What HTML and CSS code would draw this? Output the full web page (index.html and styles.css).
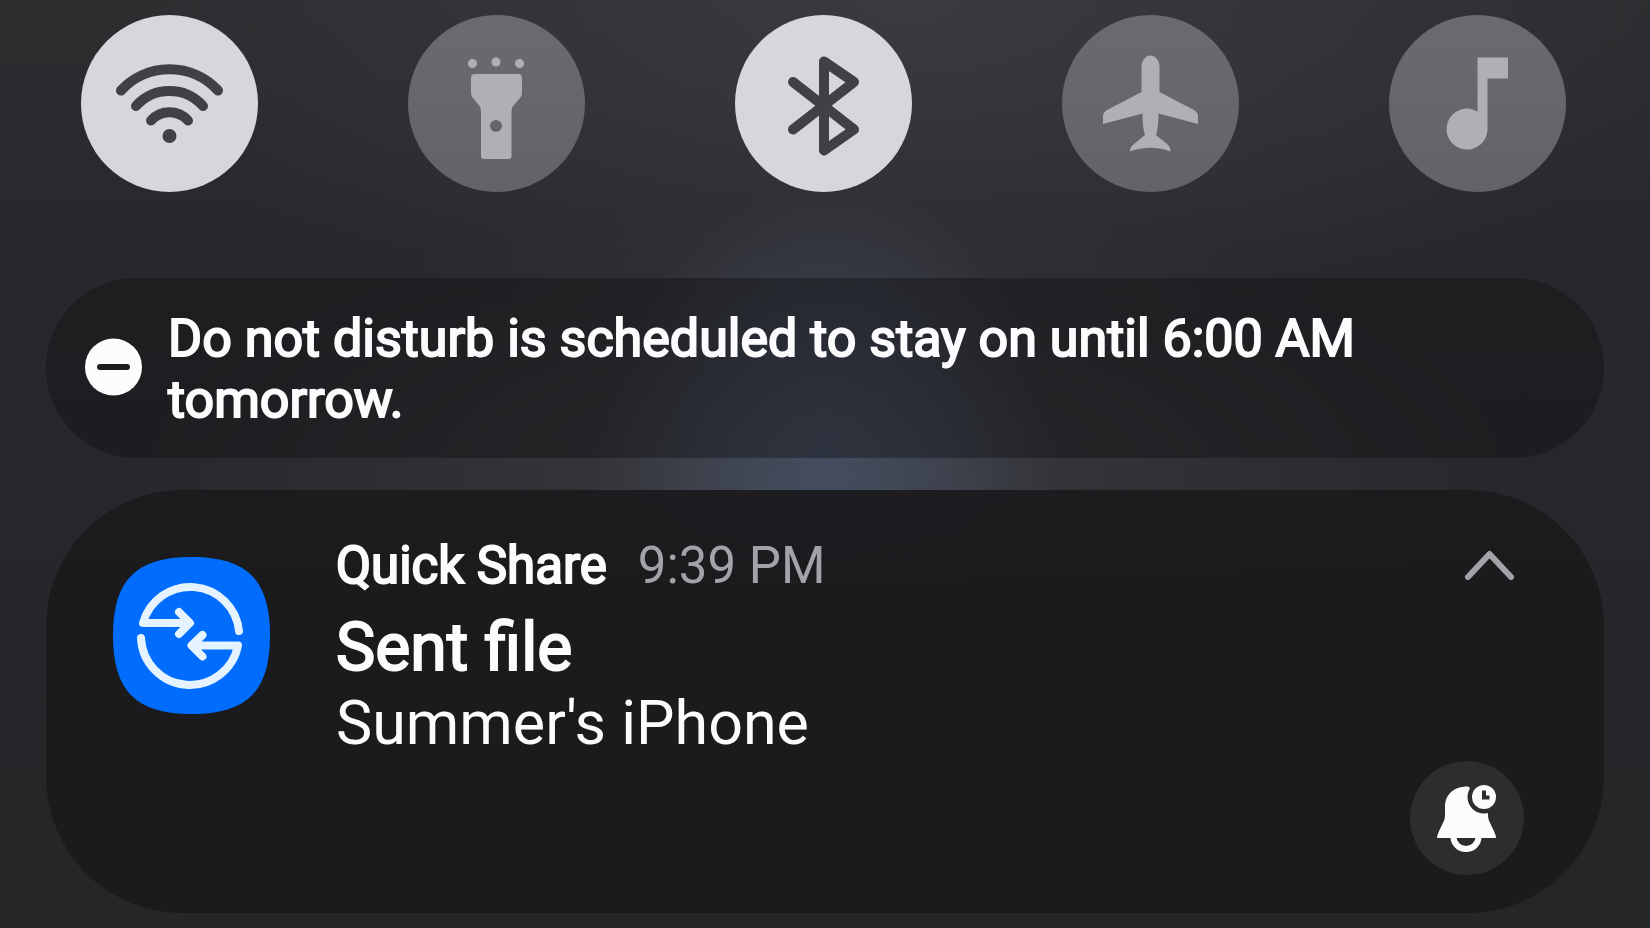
FILE: index.html
```html
<!DOCTYPE html>
<html lang="en">
<head>
    <meta charset="UTF-8">
    <meta name="viewport" content="width=device-width, initial-scale=1.0">
    <title>Notification Panel</title>
    <link rel="stylesheet" href="styles.css">
</head>
<body>
    <nav class="toggles">
        <button class="toggle on" type="button" aria-label="Wi-Fi">
            <svg viewBox="0 0 177 177">
                <g class="line">
                    <path d="M40 75.500A66 66 0 0 1 137 75.500"/>
                    <path d="M55 91A45 45 0 0 1 122 91"/>
                    <path d="M70 105.500A25 25 0 0 1 107 105.500"/>
                </g>
                <circle cx="88.500" cy="121" r="7"/>
            </svg>
        </button>
        <button class="toggle" type="button" aria-label="Flashlight">
            <svg viewBox="0 0 177 177">
                <circle cx="64.500" cy="48.500" r="4.500"/>
                <circle cx="88" cy="47" r="4.500"/>
                <circle cx="111.500" cy="48.500" r="4.500"/>
                <path fill-rule="evenodd" d="M67 59H110Q114 59 114 63V77Q114 81 112 83L105 91Q103.500 93 103.500 96V141Q103.500 144 100.500 144H76Q73 144 73 141V96Q73 93 71.500 91L65 83Q63 81 63 77V63Q63 59 67 59ZM88 105A6 6 0 1 0 88 117A6 6 0 1 0 88 105Z"/>
            </svg>
        </button>
        <button class="toggle on" type="button" aria-label="Bluetooth">
            <svg viewBox="0 0 177 177">
                <path class="line" d="M58 67L119 114.500L89 135.500V46.500L119 67L58 114.500"/>
            </svg>
        </button>
        <button class="toggle" type="button" aria-label="Airplane mode">
            <svg viewBox="0 0 177 177">
                <path d="M88.500 40.500C93 40.500 97.500 45 97.500 52V77L131 94.500Q136 97 136 101V109L96.500 98.500Q96.500 112 94 120L105 129Q108.500 131.500 108.500 136.500Q88.500 129 68 136.500Q68 131.500 72 129L83 120Q80.500 112 80.500 98.500L41 109V101Q41 97 46 94.500L79.500 77V52C79.500 45 84 40.500 88.500 40.500Z"/>
            </svg>
        </button>
        <button class="toggle" type="button" aria-label="Sound">
            <svg viewBox="0 0 177 177">
                <path d="M88.500 42.500H119V63.500H98.500V114A20.500 20.500 0 1 1 88.500 96.500Z"/>
            </svg>
        </button>
    </nav>

    <main class="notifications">
        <section class="dnd">
            <svg class="dnd-icon" viewBox="0 0 57 57">
                <circle cx="28.500" cy="28" r="28.500" fill="#fcfbfe"/>
                <path d="M15 28H42" stroke="#1e1d20" stroke-width="6" stroke-linecap="round"/>
            </svg>
            <p>Do not disturb is scheduled to stay on until 6:00 AM tomorrow.</p>
        </section>

        <article class="card">
            <svg class="app-icon" viewBox="0 0 157 157">
                <path fill="#006dff" d="M78.500 0C134 0 157 23 157 78.500S134 157 78.500 157S0 134 0 78.500S23 0 78.500 0Z"/>
                <g class="share-lines">
                    <path d="M126 74A49 49 0 0 0 30 66H76M66 55L77 66L66 77"/>
                    <path d="M28 81A49 49 0 0 0 125 88.500H79M89.500 78L78.500 88.500L89.500 99.500"/>
                </g>
            </svg>
            <div class="card-body">
                <div class="card-header">
                    <span class="app-name">Quick Share</span>
                    <time class="time">9:39 PM</time>
                    <button class="collapse" type="button" aria-label="Collapse">
                        <svg viewBox="0 0 68 60">
                            <path d="M12 41L33.500 18L55 41"/>
                        </svg>
                    </button>
                </div>
                <h2>Sent file</h2>
                <p>Summer's iPhone</p>
                <button class="snooze" type="button" aria-label="Snooze">
                    <svg viewBox="0 0 114 114">
                        <path fill="#fcfbfe" d="M58 25.500C43 25.500 35 34 35 46V55C35 61 27 71 27 77H86C86 71 78 61 78 55V40Z"/>
                        <circle cx="74" cy="36" r="16.500" fill="#2d2c2f"/>
                        <circle cx="74" cy="36" r="12" fill="#fcfbfe"/>
                        <path d="M74 29.500V36.500H79.500" fill="none" stroke="#2d2c2f" stroke-width="4"/>
                        <path d="M43.500 76A12.500 12 0 0 0 68.500 76" fill="none" stroke="#fcfbfe" stroke-width="6"/>
                    </svg>
                </button>
            </div>
        </article>
    </main>
</body>
</html>
```

FILE: styles.css
```css
* {
    box-sizing: border-box;
}

body {
    margin: 0;
    min-height: 100vh;
    font-family: Roboto, sans-serif;
    color: #fcfbfe;
    background:
        radial-gradient(ellipse 230px 290px at 50% 470px, rgba(78, 98, 130, 0.5), rgba(78, 98, 130, 0.28) 50%, rgba(78, 98, 130, 0)),
        radial-gradient(ellipse 700px 280px at 50% 480px, rgba(82, 82, 86, 0.45), rgba(82, 82, 86, 0)),
        radial-gradient(ellipse 820px 340px at 55% 0, #3b3a3f, rgba(59, 58, 63, 0)),
        linear-gradient(#2d2c2f, #28272b 30%, #262528);
}

button {
    padding: 0;
    border: 0;
    background: none;
    cursor: pointer;
}

svg {
    display: block;
}

h2,
p {
    margin: 0;
}

/* Quick toggles */
.toggles {
    display: flex;
    justify-content: space-between;
    padding: 15px 84px 0 81px;
}

.toggle {
    width: 177px;
    height: 177px;
    border-radius: 50%;
    background: linear-gradient(#6b6a6f, #636266);
    fill: #b0afb4;
}

.toggle.on {
    background: #d8d6da;
    fill: #414044;
}

.line {
    fill: none;
    stroke: #414044;
    stroke-width: 10;
    stroke-linecap: round;
    stroke-linejoin: round;
}

/* Notifications */
.notifications {
    display: flex;
    flex-direction: column;
    gap: 32px;
    padding: 86px 46px 16px;
}

.dnd {
    display: flex;
    align-items: center;
    gap: 26px;
    padding: 30px 200px 28px 39px;
    border-radius: 90px;
    background: rgba(15, 14, 18, 0.4);
    font-size: 52px;
    line-height: 61px;
}

/* regular letterforms, thickened a little */
.dnd p,
.app-name,
.card h2 {
    font-weight: 400;
    -webkit-text-stroke: 2px #fcfbfe;
}

.dnd-icon {
    flex: none;
    width: 57px;
    height: 57px;
    margin-bottom: 4px;
    overflow: visible;
}

.card {
    display: flex;
    align-items: flex-start;
    gap: 66px;
    padding: 46px 80px 38px 67px;
    border-radius: 136px;
    background: linear-gradient(rgba(27, 26, 29, 0.94), #1b1a1d 25%);
}

.app-icon {
    flex: none;
    width: 157px;
    height: 157px;
    margin-top: 21px;
}

.share-lines {
    fill: none;
    stroke: #e4f3ff;
    stroke-width: 8;
    stroke-linecap: round;
    stroke-linejoin: round;
}

.card-body {
    display: flex;
    flex: 1;
    flex-direction: column;
}

.card-header {
    display: flex;
    align-items: center;
    gap: 31px;
    margin-bottom: 13px;
    font-size: 51px;
    line-height: 60px;
}

.time {
    color: #a3a2a6;
}

.collapse {
    width: 68px;
    height: 60px;
    margin-left: auto;
    fill: none;
    stroke: #a3a2a6;
    stroke-width: 6;
    stroke-linecap: round;
    stroke-linejoin: round;
}

.card h2 {
    font-size: 66px;
    line-height: 77px;
}

.card p {
    font-size: 61px;
    line-height: 75px;
}

.snooze {
    align-self: flex-end;
    width: 114px;
    height: 114px;
    border-radius: 50%;
    background: #2d2c2f;
}
```
